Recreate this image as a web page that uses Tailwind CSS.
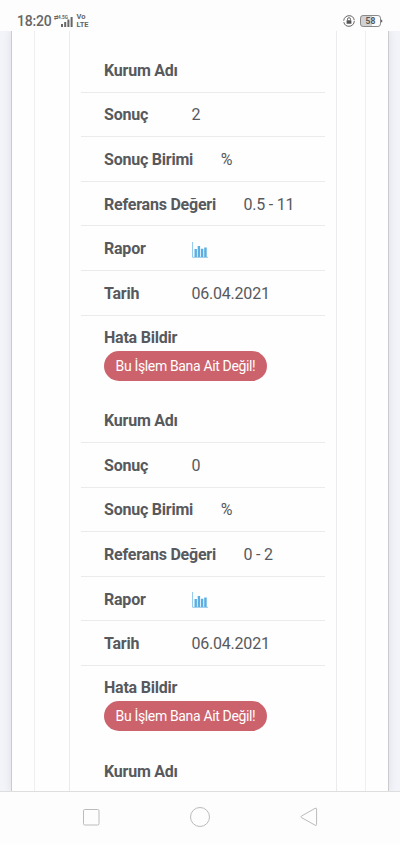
<!DOCTYPE html>
<html lang="tr">
<head>
  <meta charset="UTF-8" />
  <meta name="viewport" content="width=device-width, initial-scale=1.0"/>
  <title>Tahlil Sonuçları</title>
  <script src="https://cdn.jsdelivr.net/npm/@tailwindcss/browser@4"></script>
</head>
<body class="h-[844px] overflow-hidden flex flex-col bg-[#fdfdfd] font-[Roboto,sans-serif] text-[#57595d]">

  <!-- status bar -->
  <header class="h-[31px] shrink-0 flex items-start pl-[17px] pr-[17px] text-[#666]">
    <span class="mt-[13px] w-[37px] text-[14px] leading-[17px] font-medium tracking-[-0.2px] whitespace-nowrap">18:20</span>
    <svg class="mt-[14px] w-[20px] h-[14px]" viewBox="0 0 20 14" fill="#666">
      <text x="0" y="5" font-size="4.6" font-weight="700" textLength="14" lengthAdjust="spacingAndGlyphs">⇄4.5G</text>
      <rect x="7" y="10" width="2" height="3"/>
      <rect x="10.2" y="8" width="2" height="5"/>
      <rect x="13.4" y="5.5" width="2" height="7.5"/>
      <rect x="16.6" y="3" width="2" height="10"/>
    </svg>
    <div class="mt-[13px] ml-[2.5px] flex flex-col text-[7.5px] leading-[7.5px] font-bold"><span>Vo</span><span>LTE</span></div>
    <svg class="ml-auto mt-[15px] w-[12px] h-[12px]" viewBox="0 0 12 12" fill="none" stroke="#666">
      <circle cx="6" cy="6" r="5.3" stroke-width="1" stroke-dasharray="15 1.6"/>
      <path d="M4.5 5.2V4.2a1.5 1.5 0 0 1 3 0v1" stroke-width="1"/>
      <rect x="3.6" y="5.2" width="4.8" height="3.6" rx=".4" fill="#555" stroke="none"/>
    </svg>
    <svg class="ml-[5px] mt-[15px] w-[23px] h-[12px]" viewBox="0 0 23 12">
      <path d="M3 .5h9v11H3A2.4 2.4 0 0 1 .5 9V3A2.4 2.4 0 0 1 3 .5z" fill="#d2d2d2"/>
      <rect x=".5" y=".5" width="20" height="11" rx="2.6" fill="none" stroke="#888"/>
      <path d="M21.6 4.7v2.6" stroke="#666" stroke-width="1.2"/>
      <text x="10.4" y="9" font-size="8.5" font-weight="700" fill="#555" text-anchor="middle">58</text>
    </svg>
  </header>

  <!-- nested cards -->
  <main class="h-[760px] shrink-0 overflow-hidden flex bg-[#f3f4f9] px-[11px]">
    <div class="flex-1 flex bg-[#fefefe] border-x border-[#cbccce] shadow-[0_0_8px_rgba(60,65,90,0.12)] pl-[22px] pr-[22px]">
      <div class="flex-1 flex border-x border-[#efeff1] pl-[34px] pr-[28px]">
        <div id="results" class="flex-1 border-x border-[#ebebed] pt-[17px] px-[11px]"></div>
      </div>
    </div>
  </main>

  <!-- navigation bar -->
  <nav class="flex-1 border-t border-[#dedede] flex justify-center items-start gap-[89px] pt-[14px]">
    <svg class="w-[20px] h-[22px]" viewBox="0 0 20 22" fill="none" stroke="#bbb"><rect x="2.5" y="3.5" width="15.5" height="15.5" rx="1.3"/></svg>
    <svg class="w-[20px] h-[22px]" viewBox="0 0 20 22" fill="none" stroke="#bbb"><circle cx="10" cy="11" r="9.5"/></svg>
    <svg class="w-[20px] h-[22px]" viewBox="0 0 20 22" fill="none" stroke="#bbb"><path d="M2.4 10.1 16 2.4q1.6-.8 1.6.8v15.2q0 1.6-1.5.8L2.4 11.5q-1-.7 0-1.4z"/></svg>
  </nav>

  <script>
    const chart = `
      <svg class="w-[16px] h-[16px] mt-px" viewBox="0 0 16 16">
        <path d="M.6 0v15.3H16" fill="none" stroke="#8cc6ea" stroke-width="1"/>
        <path d="M2.5 7h2.4v7.9H2.5zM5.7 4h2.4v10.9H5.7zM8.9 6.8h2.4v8.1H8.9zM12.2 5.5h2.5v9.4h-2.5z" fill="#5aaee3"/>
      </svg>`;

    const results = [
      { sonuc: "2", birim: "%", referans: "0.5 - 11", tarih: "06.04.2021" },
      { sonuc: "0", birim: "%", referans: "0 - 2", tarih: "06.04.2021" }
    ];

    const row = (label, value) => `
      <div class="h-[44.6px] flex items-center gap-[27.5px] border-b border-[#ebebed] pt-[2px] pl-[23px] text-[16px] tracking-[-0.22px] whitespace-nowrap">
        <span class="min-w-[60px] font-bold">${label}</span>
        <span>${value}</span>
      </div>`;

    document.getElementById("results").innerHTML = results.map(r => `
      <div class="h-[350.4px]">
        ${row("Kurum Adı", "")}
        ${row("Sonuç", r.sonuc)}
        ${row("Sonuç Birimi", r.birim)}
        ${row("Referans Değeri", r.referans)}
        ${row("Rapor", chart)}
        ${row("Tarih", r.tarih)}
        <div class="pl-[23px] pt-[10px] text-[16px] leading-[24px] tracking-[-0.22px]">
          <div class="font-bold">Hata Bildir</div>
          <button class="block mt-px w-[163px] h-[30px] rounded-full bg-[#cc626c] text-white text-[14px] tracking-[-0.35px] whitespace-nowrap">Bu İşlem Bana Ait Değil!</button>
        </div>
      </div>`).join("") + row("Kurum Adı", "");
  </script>
</body>
</html>
